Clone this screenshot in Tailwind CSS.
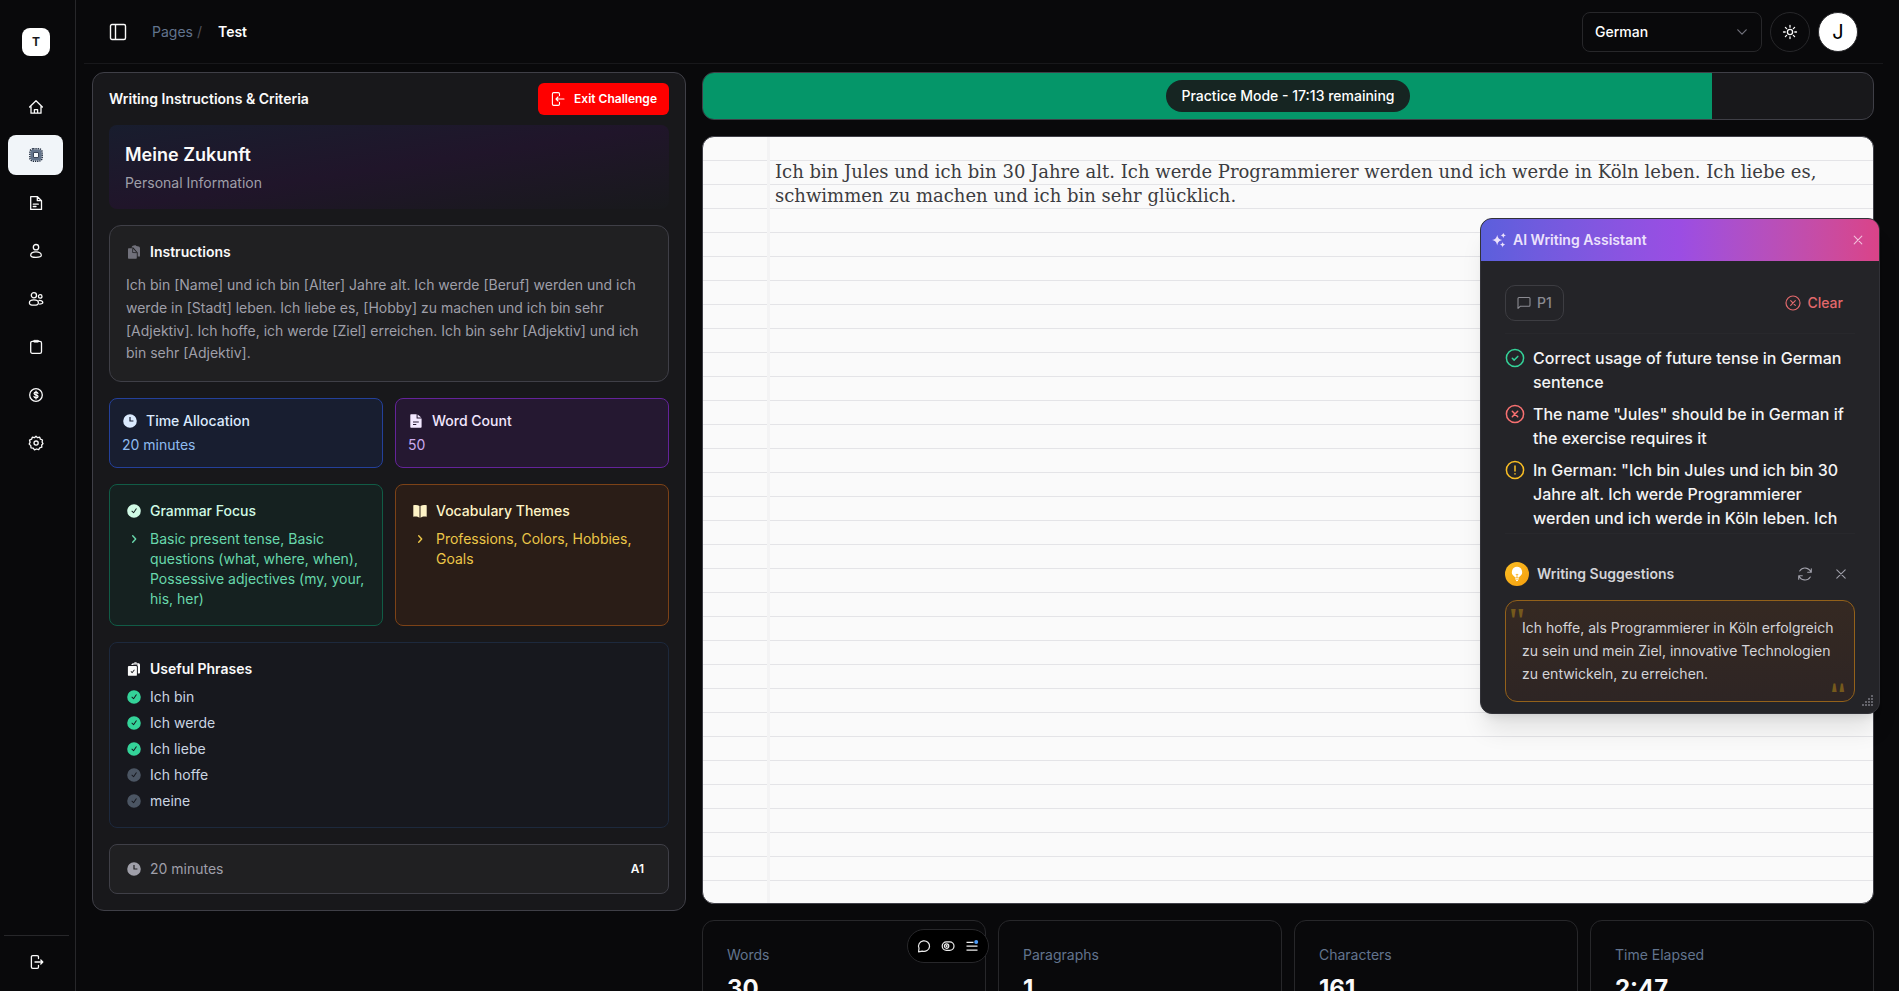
<!DOCTYPE html>
<html lang="en">
<head>
<meta charset="utf-8">
<meta name="viewport" content="width=device-width, initial-scale=1">
<title>Writing practice</title>
<script src="https://cdn.jsdelivr.net/npm/@tailwindcss/browser@4"></script>
</head>
<body class="bg-[#09090b] text-zinc-50 font-['Inter',sans-serif] text-sm antialiased">
<svg class="hidden" aria-hidden="true">
  <symbol id="check-solid" viewBox="0 0 16 16"><path fill="currentColor" fill-rule="evenodd" d="M8 1.2a6.8 6.8 0 1 0 0 13.6A6.8 6.8 0 0 0 8 1.2Zm2.700 4.900a.5.5 0 0 0-.8-.6L7.500 8.900 6.300 7.800a.5.5 0 0 0-.7.7l1.600 1.600c.24.22.6.2.8-.07z"/></symbol>
  <symbol id="clock-solid" viewBox="0 0 16 16"><path fill="currentColor" fill-rule="evenodd" d="M8 1.2a6.8 6.8 0 1 0 0 13.6A6.8 6.8 0 0 0 8 1.2Zm.6 2.9H7.400v4.500h4V7.400H8.600z"/></symbol>
  <symbol id="chevron" viewBox="0 0 16 16"><path fill="none" stroke="currentColor" stroke-width="1.400" stroke-linecap="round" stroke-linejoin="round" d="m6.700 4.700 3 3.300-3 3.300"/></symbol>
</svg>
<div class="relative flex h-screen overflow-hidden">
  <aside class="flex w-[76px] shrink-0 flex-col border-r border-zinc-800">
    <a href="#" class="ml-[22px] mt-7 flex size-7 items-center justify-center rounded-lg bg-white text-xs font-bold text-zinc-900">T</a>
    <nav class="mx-2 mt-[31px] flex flex-col gap-2 pr-1" aria-label="Main">
      <a href="#" aria-label="Home" class="flex h-10 items-center justify-center rounded-lg">
        <svg class="size-4" viewBox="0 0 16 16" fill="none" stroke="currentColor" stroke-width="1.300" stroke-linejoin="round" stroke-linecap="round"><path d="m1.600 8 6.400-6.200L14.400 8M3 7.200v7h10v-7M6.400 14v-3.300h3.200V14"/></svg></a>
      <a href="#" aria-label="Challenges" aria-current="page" class="flex h-10 items-center justify-center rounded-lg bg-slate-100 text-slate-800">
        <svg class="size-4" viewBox="0 0 16 16"><rect x="2.400" y="2.400" width="11.200" height="11.200" rx="3" fill="#64748b"/><rect x="1.800" y="1.800" width="12.400" height="12.400" rx="3.400" fill="none" stroke="currentColor" stroke-width="1.400" stroke-dasharray="1.300 .9"/><rect x="5.500" y="5.500" width="5" height="5" rx=".5" fill="#f8fafc" stroke="currentColor" stroke-width=".8"/></svg></a>
      <a href="#" aria-label="Documents" class="flex h-10 items-center justify-center rounded-lg">
        <svg class="size-4" viewBox="0 0 16 16" fill="none" stroke="currentColor" stroke-width="1.300" stroke-linejoin="round" stroke-linecap="round"><path d="M2.700 1.700h6.800l4 4v8.700H2.700zM9.300 1.700v4h4M5.300 9.200h5M5.300 11.500h2.700"/></svg></a>
      <a href="#" aria-label="Profile" class="flex h-10 items-center justify-center rounded-lg">
        <svg class="size-4" viewBox="0 0 16 16" fill="none" stroke="currentColor" stroke-width="1.300"><circle cx="8" cy="4.200" r="2.700"/><path d="M2.700 12.200c0-2 2.100-3.300 5.300-3.300s5.300 1.300 5.300 3.300c0 1.500-1.600 2.100-5.300 2.100s-5.300-.6-5.300-2.100Z"/></svg></a>
      <a href="#" aria-label="Groups" class="flex h-10 items-center justify-center rounded-lg">
        <svg class="size-4" viewBox="0 0 16 16" fill="none" stroke="currentColor" stroke-width="1.300"><circle cx="5.900" cy="4.200" r="2.600"/><circle cx="12.200" cy="5.400" r="1.800"/><path d="M1.400 11.900c0-1.800 1.700-3 4.500-3s4.500 1.200 4.500 3c0 1.500-1.300 2.200-4.500 2.200s-4.500-.7-4.500-2.200ZM10.500 9.600c2.500-.5 4.300.5 4.300 2 0 1-.9 1.500-3.700 1.500"/></svg></a>
      <a href="#" aria-label="Tasks" class="flex h-10 items-center justify-center rounded-lg">
        <svg class="size-4" viewBox="0 0 16 16" fill="none" stroke="currentColor" stroke-width="1.300" stroke-linejoin="round"><rect x="2.700" y="2.300" width="10.800" height="12" rx="1.600"/><path d="M5.400 2.200c0-.6.500-.9 1-.9h3.400c.6 0 1 .4 1 .9s-.4 1-1 1H6.400c-.6 0-1-.4-1-1Z" fill="currentColor" stroke-width=".6"/></svg></a>
      <a href="#" aria-label="Pricing" class="flex h-10 items-center justify-center rounded-lg">
        <svg class="size-4" viewBox="0 0 16 16" fill="none" stroke="currentColor" stroke-width="1.300" stroke-linecap="round"><circle cx="8" cy="8" r="6.300"/><path d="M9.900 6.300c-.2-.8-1-1.100-1.900-1.100-1.100 0-1.900.5-1.900 1.400 0 2 3.900.8 3.900 2.800 0 .9-.9 1.400-2 1.400-1 0-1.900-.4-2-1.300M8 4.100v7.800"/></svg></a>
      <a href="#" aria-label="Settings" class="flex h-10 items-center justify-center rounded-lg">
        <svg class="size-4" viewBox="0 0 16 16" fill="none" stroke="currentColor" stroke-width="1.300" stroke-linejoin="round"><path d="m8 1.300 1.600 1.400 2.100-.5.700 2 2.100.8-.4 2.200L15 8.500l-1.300 1.500.1 2.200-2.100.6-1 1.900-2.100-.7-2.100.9-1.300-1.800-2.200-.3-.2-2.200L1.200 9.100l.9-1.900-.6-2.100 2.100-.9.700-2 2.100.5z"/><circle cx="8.100" cy="8.100" r="2.100"/></svg></a>
    </nav>
    <div class="ml-1 mr-1.5 mt-auto flex h-14 items-center justify-center border-t border-zinc-800 pb-[3px]">
      <button aria-label="Log out"><svg class="size-4" viewBox="0 0 16 16" fill="none" stroke="currentColor" stroke-width="1.300" stroke-linejoin="round" stroke-linecap="round"><path d="M9.500 4.600V2.900c0-.8-.5-1.300-1.300-1.300H3.700c-.8 0-1.300.5-1.300 1.300v10.200c0 .8.500 1.300 1.300 1.300h4.500c.8 0 1.300-.5 1.300-1.300v-1.700M6 8h7.500M11.800 6l2 2-2 2"/></svg></button>
    </div>
  </aside>

  <div class="flex min-w-0 flex-1 flex-col">
    <header class="ml-2 mr-4 flex h-16 shrink-0 items-center border-b border-zinc-900 px-[25px]">
      <button aria-label="Toggle sidebar"><svg class="size-[18px]" viewBox="0 0 18 18" fill="none" stroke="currentColor" stroke-width="1.400"><rect x="1.500" y="1.500" width="15" height="15" rx="1.500"/><path d="M6.500 1.500v15"/></svg></button>
      <nav class="ml-[25px] flex" aria-label="Breadcrumb"><a href="#" class="text-slate-500">Pages</a><span class="ml-1 text-zinc-600">/</span><a href="#" class="ml-4 font-semibold text-white">Test</a></nav>
      <div class="ml-auto flex items-center gap-2">
        <label class="relative block w-[180px]">
          <select aria-label="Language" class="block h-10 w-full appearance-none rounded-lg border border-zinc-800 bg-transparent px-3 text-sm font-medium text-white"><option>German</option></select>
          <svg class="pointer-events-none absolute right-3 top-3 size-4 text-zinc-500" viewBox="0 0 16 16" fill="none" stroke="currentColor" stroke-width="1.200" stroke-linecap="round" stroke-linejoin="round"><path d="m3.800 5.800 4.200 4.400 4.200-4.400"/></svg>
        </label>
        <button aria-label="Theme" class="flex size-10 items-center justify-center rounded-full border border-zinc-800"><svg class="size-4" viewBox="0 0 16 16" fill="none" stroke="currentColor" stroke-width="1.300" stroke-linecap="round"><circle cx="8" cy="8" r="2.600"/><path d="M8 1.500v1.700M8 12.800v1.700M1.500 8h1.700M12.800 8h1.700M3.400 3.400l1.200 1.200M11.400 11.400l1.200 1.200M3.400 12.600l1.200-1.200M11.400 4.600l1.200-1.200"/></svg></button>
        <button aria-label="Account" class="flex size-10 items-center justify-center rounded-full border border-zinc-800 bg-white text-xl text-black">J</button>
      </div>
    </header>

    <main class="flex flex-1 items-start gap-4 pl-4 pr-[25px] pt-2">
      <section class="w-1/3 shrink-0 rounded-xl border border-zinc-700 bg-zinc-900 px-4 pb-4 pt-2.5">
        <div class="flex items-center justify-between">
          <h2 class="font-semibold">Writing Instructions &amp; Criteria</h2>
          <button class="flex h-8 items-center gap-2 rounded-md bg-[#ff0000] px-3 text-xs font-semibold text-white"><svg class="size-4" viewBox="0 0 16 16" fill="none" stroke="currentColor" stroke-width="1.100" stroke-linejoin="round" stroke-linecap="round"><path d="M9.500 4.600V2.900c0-.8-.5-1.300-1.300-1.300H3.700c-.8 0-1.300.5-1.300 1.300v10.200c0 .8.500 1.300 1.300 1.300h4.500c.8 0 1.300-.5 1.300-1.300v-1.700M6 8h8M8 6 6 8l2 2"/></svg>Exit Challenge</button>
        </div>
        <div class="mt-2.5 rounded-lg bg-linear-to-br from-[#181d2e] via-[#20152a] to-[#18191c] p-4">
          <h3 class="text-lg/7 font-semibold">Meine Zukunft</h3>
          <p class="mt-1 text-zinc-400">Personal Information</p>
        </div>
        <div class="mt-4 rounded-xl border border-zinc-700 bg-[#202022] p-4">
          <h3 class="flex items-center gap-2 font-semibold"><svg class="size-4 text-zinc-500" viewBox="0 0 16 16"><path fill="currentColor" d="M2 5.200c0-.6.400-1 1-1h3.600l4.200 4.600v5c0 .6-.4 1-1 1H3c-.6 0-1-.4-1-1z"/><path fill="currentColor" d="M5.500 3.400C6 1.900 7.300 1.200 9 1.200h.6c.6.700 1.200 1 2.200 1 1.300 0 2.200.9 2.200 2.100v8.200h-2.300V8.400L7.400 3.600z"/><path d="m6.700 4.300-.1 4.200 4.200.2" fill="none" stroke="#202022" stroke-width=".8"/></svg>Instructions</h3>
          <p class="mt-3 leading-relaxed text-zinc-400">Ich bin [Name] und ich bin [Alter] Jahre alt. Ich werde [Beruf] werden und ich werde in [Stadt] leben. Ich liebe es, [Hobby] zu machen und ich bin sehr [Adjektiv]. Ich hoffe, ich werde [Ziel] erreichen. Ich bin sehr [Adjektiv] und ich bin sehr [Adjektiv].</p>
        </div>
        <div class="mt-4 grid grid-cols-2 gap-3">
          <div class="rounded-lg border border-[#24409a] bg-[#181e30] p-3">
            <h3 class="flex items-center gap-2 font-medium text-blue-100"><svg class="size-4"><use href="#clock-solid"/></svg>Time Allocation</h3>
            <p class="mt-1 text-[#8fbcf0]">20 minutes</p>
          </div>
          <div class="rounded-lg border border-[#64239a] bg-[#251831] p-3">
            <h3 class="flex items-center gap-2 font-medium text-purple-100"><svg class="size-4" viewBox="0 0 16 16"><path fill="currentColor" fill-rule="evenodd" d="M2.300 2.200c0-.6.400-1 1-1h5.300v4.200h5v8.400c0 .6-.4 1-1 1H3.300c-.6 0-1-.4-1-1zM5 8.600v1h5.800v-1zm0 2.500v1h3.300v-1zM9.600 1.600l3.700 2.900H9.600z"/></svg>Word Count</h3>
            <p class="mt-1 text-[#cba9ee]">50</p>
          </div>
        </div>
        <div class="mt-4 grid grid-cols-2 gap-3">
          <div class="rounded-lg border border-[#115c46] bg-[#152120] p-4">
            <h3 class="flex items-center gap-2 font-medium text-emerald-100"><svg class="size-4"><use href="#check-solid"/></svg>Grammar Focus</h3>
            <ul class="mt-2 text-[#68d8ac]"><li class="flex gap-2"><svg class="mt-0.5 size-4 shrink-0"><use href="#chevron"/></svg>Basic present tense, Basic questions (what, where, when), Possessive adjectives (my, your, his, her)</li></ul>
          </div>
          <div class="rounded-lg border border-[#7c4217] bg-[#2a1d17] p-4">
            <h3 class="flex items-center gap-2 font-medium text-amber-100"><svg class="size-4" viewBox="0 0 16 16"><path fill="currentColor" d="M7.500 2.900C5.800 1.800 3.400 1.700 1.300 2.300v11.500c2.100-.5 4.400-.4 6.200.9zM8.500 2.900c1.700-1.100 4.100-1.200 6.200-.6v11.500c-2.100-.5-4.400-.4-6.200.9z"/></svg>Vocabulary Themes</h3>
            <ul class="mt-2 text-[#ecc648]"><li class="flex gap-2"><svg class="mt-0.5 size-4 shrink-0"><use href="#chevron"/></svg>Professions, Colors, Hobbies, Goals</li></ul>
          </div>
        </div>
        <div class="mt-4 rounded-lg border border-slate-800 bg-[#17181e] p-4">
          <h3 class="flex items-center gap-2 font-semibold"><svg class="size-4" viewBox="0 0 16 16"><path fill="currentColor" fill-rule="evenodd" d="M2.800 5h7.200c.5 0 .9.400.9.900v8c0 .5-.4.900-.9.900H2.800c-.5 0-.9-.4-.9-.9v-8c0-.5.400-.9.900-.9Zm6 4-.7-.5-2 2.400-.9-.8-.6.6 1.600 1.500z"/><path fill="currentColor" d="M5.200 4c.3-1.200 1.200-1.800 2.400-1.800C8.100 1.500 8.700 1.200 9.500 1.200s1.400.4 1.800 1h1c1 0 1.700.7 1.700 1.700v7.700c0 .6-.4 1-1 1h-1.100V5.500c0-.8-.6-1.500-1.500-1.500z"/><path fill="none" stroke="#17181e" stroke-width=".7" d="M7.300 3.200h4.200"/></svg>Useful Phrases</h3>
          <ul class="mt-2 flex flex-col gap-1.5 text-slate-300">
            <li class="flex items-center gap-2"><svg class="size-4 text-[#34d399]"><use href="#check-solid"/></svg>Ich bin</li>
            <li class="flex items-center gap-2"><svg class="size-4 text-[#34d399]"><use href="#check-solid"/></svg>Ich werde</li>
            <li class="flex items-center gap-2"><svg class="size-4 text-[#34d399]"><use href="#check-solid"/></svg>Ich liebe</li>
            <li class="flex items-center gap-2"><svg class="size-4 text-[#4b5563]"><use href="#check-solid"/></svg>Ich hoffe</li>
            <li class="flex items-center gap-2"><svg class="size-4 text-[#4b5563]"><use href="#check-solid"/></svg>meine</li>
          </ul>
        </div>
        <div class="mt-4 flex h-[50px] items-center justify-between rounded-lg border border-zinc-700 bg-[#202022] px-4">
          <span class="flex items-center gap-2 text-zinc-400"><svg class="size-4"><use href="#clock-solid"/></svg>20 minutes</span>
          <span class="px-2 text-xs font-semibold">A1</span>
        </div>
      </section>

      <section class="min-w-0 flex-1">
        <div class="relative h-12 overflow-hidden rounded-xl border border-zinc-700 bg-zinc-900">
          <div class="h-full bg-[#059669]" style="width:86.2%"></div>
          <div class="absolute inset-0 flex items-center justify-center"><span class="flex h-8 items-center rounded-full bg-zinc-900/90 px-4 font-medium text-white">Practice Mode - 17:13 remaining</span></div>
        </div>
        <div class="mt-4">
          <textarea aria-label="Your text" spellcheck="false" class="block h-[768px] w-full resize-none rounded-xl border border-zinc-700 bg-[#fafafa] bg-[linear-gradient(90deg,transparent_64px,#f3f3f4_64px,#f3f3f4_67px,transparent_67px),repeating-linear-gradient(180deg,transparent_0px,transparent_23px,#e4e4e7_23px,#e4e4e7_24px)] py-[23px] pl-[72px] pr-6 font-['DejaVu_Serif',serif] text-lg/6 text-[#3c3c40] outline-none">Ich bin Jules und ich bin 30 Jahre alt. Ich werde Programmierer werden und ich werde in Köln leben. Ich liebe es, schwimmen zu machen und ich bin sehr glücklich.</textarea>
        </div>
        <dl class="mt-4 grid grid-cols-4 gap-3">
          <div class="rounded-xl border border-zinc-800 p-6"><dt class="text-slate-500">Words</dt><dd class="mt-2 text-2xl font-bold">30</dd></div>
          <div class="rounded-xl border border-zinc-800 p-6"><dt class="text-slate-500">Paragraphs</dt><dd class="mt-2 text-2xl font-bold">1</dd></div>
          <div class="rounded-xl border border-zinc-800 p-6"><dt class="text-slate-500">Characters</dt><dd class="mt-2 text-2xl font-bold">161</dd></div>
          <div class="rounded-xl border border-zinc-800 p-6"><dt class="text-slate-500">Time Elapsed</dt><dd class="mt-2 text-2xl font-bold">2:47</dd></div>
        </dl>
      </section>
    </main>
  </div>

  <!-- Floating toolbar -->
  <div class="absolute bottom-7 left-[907px] flex h-[34px] items-center gap-2 rounded-full border border-zinc-800 bg-black px-2">
    <button aria-label="Comments"><svg class="size-4" viewBox="0 0 16 16" fill="none" stroke="#ededed" stroke-width="1.200" stroke-linejoin="round"><path d="M2.600 13.800 3 10.200A5.500 5.300 0 1 1 6.200 13.100Z"/></svg></button>
    <button aria-label="Preview"><svg class="size-4" viewBox="0 0 16 16" fill="none" stroke="#ededed" stroke-width="1.200"><rect x="2.200" y="3.800" width="11.800" height="8.600" rx="4.300"/><circle cx="6.600" cy="8.100" r="2.200"/><circle cx="6.600" cy="8.100" r=".5"/></svg></button>
    <button aria-label="Menu"><svg class="size-4" viewBox="0 0 16 16"><path d="M2.500 4.300h7M2.500 8.200h11M2.500 12.100h11" stroke="#ededed" stroke-width="1.300"/><circle cx="12.200" cy="4.100" r="2" fill="#4f9cf9"/></svg></button>
  </div>

  <!-- Assistant window -->
  <aside class="absolute right-[19px] top-[218px] w-[400px] overflow-hidden rounded-xl border border-[#323238] bg-[#242428] shadow-xl" aria-label="AI Writing Assistant">
    <header class="flex h-[42px] items-center gap-1.5 bg-linear-to-r from-[#5b5fdc] via-[#9b4de3] to-[#da4388] px-2.5 text-[#ece2fc]">
      <svg class="size-4" viewBox="0 0 16 16" fill="currentColor"><path d="M6.200 2.800c.7 3.400 1.900 4.600 5.200 5.300-3.300.7-4.500 1.900-5.200 5.300C5.500 10 4.300 8.800 1 8.100c3.300-.7 4.500-1.900 5.200-5.300ZM12.300.8c.4 1.700 1 2.300 2.700 2.700-1.700.4-2.300 1-2.700 2.700-.4-1.700-1-2.300-2.700-2.700 1.700-.4 2.300-1 2.700-2.700ZM11.600 10.100c.4 1.700 1 2.300 2.700 2.700-1.700.4-2.300 1-2.700 2.700-.4-1.700-1-2.300-2.700-2.700 1.700-.4 2.300-1 2.700-2.700Z"/></svg>
      <h2 class="font-semibold">AI Writing Assistant</h2>
      <button aria-label="Close" class="ml-auto mr-[3px] text-[#f3c0dc]"><svg class="size-4" viewBox="0 0 16 16" fill="none" stroke="currentColor" stroke-width="1.100" stroke-linecap="round"><path d="m4.200 4.200 7.600 7.600M11.800 4.200l-7.600 7.600"/></svg></button>
    </header>
    <div class="px-6 pb-[11px] pt-6">
      <div class="flex items-center justify-between border-b border-[#28282c] pb-3">
        <button class="flex h-9 items-center gap-1.5 rounded-[10px] border border-[#3d3d42] px-[11px] font-medium text-[#8b8b92]"><svg class="size-3.5" viewBox="0 0 14 14" fill="none" stroke="currentColor" stroke-width="1.100" stroke-linejoin="round"><path d="M1 12.300V2.500c0-.6.400-1 1-1h10c.6 0 1 .4 1 1v6.800c0 .6-.4 1-1 1H3.200z"/></svg>P1</button>
        <button class="flex h-9 items-center gap-1.5 px-3 font-medium text-[#e2696c]"><svg class="size-4" viewBox="0 0 16 16" fill="none" stroke="currentColor" stroke-width="1.200" stroke-linecap="round"><circle cx="8" cy="8" r="7"/><path d="m5.700 5.700 4.600 4.600M10.300 5.700l-4.600 4.600"/></svg>Clear</button>
      </div>
      <ul class="mt-3 flex h-46 flex-col gap-2 overflow-hidden text-base/6 font-medium text-zinc-100">
        <li class="flex gap-2"><svg class="mt-0.5 size-5 shrink-0 text-[#34d399]" viewBox="0 0 20 20" fill="none" stroke="currentColor" stroke-width="1.500" stroke-linecap="round" stroke-linejoin="round"><circle cx="10" cy="10" r="8.600"/><path d="m7.300 10.200 1.900 1.900 3.600-3.700"/></svg>Correct usage of future tense in German sentence</li>
        <li class="flex gap-2"><svg class="mt-0.5 size-5 shrink-0 text-[#f87171]" viewBox="0 0 20 20" fill="none" stroke="currentColor" stroke-width="1.500" stroke-linecap="round"><circle cx="10" cy="10" r="8.600"/><path d="m7.300 7.300 5.400 5.400M12.700 7.300l-5.400 5.400"/></svg>The name "Jules" should be in German if the exercise requires it</li>
        <li class="flex gap-2"><svg class="mt-0.5 size-5 shrink-0 text-[#fbbf24]" viewBox="0 0 20 20" fill="none" stroke="currentColor" stroke-width="1.500" stroke-linecap="round"><circle cx="10" cy="10" r="8.600"/><path d="M10 6v5M10 13.700v.2"/></svg>In German: "Ich bin Jules und ich bin 30 Jahre alt. Ich werde Programmierer werden und ich werde in Köln leben. Ich</li>
      </ul>
      <div class="mt-[3px] flex items-center border-t border-[#28282c] pt-7">
        <span class="flex size-6 items-center justify-center rounded-full bg-linear-to-br from-[#fbbf24] to-[#f59e0b]"><svg class="size-4" viewBox="0 0 16 16" fill="#fff"><path d="M8 .8a5.200 5.200 0 0 0-3 9.400c.7.500 1 .9 1.100 1.400h1.500V9.300L6.500 8.200l.6-.5.9.7.9-.7.6.5-1.100 1.100v2.300h1.500c.1-.5.400-.9 1.100-1.400A5.200 5.200 0 0 0 8 .8ZM6.200 12.300h3.600v1.200H6.200zM6.900 14h2.200c-.1.800-.5 1.200-1.100 1.200S7 14.800 6.900 14Z"/></svg></span>
        <h3 class="ml-2 font-semibold text-zinc-300">Writing Suggestions</h3>
        <button aria-label="Refresh" class="ml-auto text-zinc-400"><svg class="size-4" viewBox="0 0 16 16" fill="none" stroke="currentColor" stroke-width="1.100" stroke-linecap="round" stroke-linejoin="round"><path d="M14 6.300A6.300 6.300 0 0 0 2.700 5M14.300 2.700v3.600h-3.600M2 9.700A6.300 6.300 0 0 0 13.300 11M1.700 13.300V9.700h3.600"/></svg></button>
        <button aria-label="Dismiss" class="ml-5 mr-1.5 text-zinc-400"><svg class="size-4" viewBox="0 0 16 16" fill="none" stroke="currentColor" stroke-width="1.100" stroke-linecap="round"><path d="m3.800 3.800 8.400 8.400M12.200 3.800l-8.400 8.400"/></svg></button>
      </div>
      <blockquote class="relative mt-3.5 rounded-xl border border-[#93611a] bg-linear-to-b from-[#352922] to-[#2e2524] p-4 leading-relaxed text-zinc-300">
        <span class="absolute left-px top-0 font-['Liberation_Serif',serif] text-4xl font-bold text-[#75591c]" aria-hidden="true">"</span>
        Ich hoffe, als Programmierer in Köln erfolgreich zu sein und mein Ziel, innovative Technologien zu entwickeln, zu erreichen.
        <span class="absolute bottom-px right-1.5 rotate-180 font-['Liberation_Serif',serif] text-4xl font-bold text-[#75591c]" aria-hidden="true">"</span>
      </blockquote>
    </div>
    <svg class="absolute bottom-1.5 right-[5px] size-3 text-[#63636a]" viewBox="0 0 12 12" fill="currentColor"><path d="M9 0h2v2H9zM6 3h2v2H6zM9 3h2v2H9zM3 6h2v2H3zM6 6h2v2H6zM9 6h2v2H9zM0 9h2v2H0zM3 9h2v2H3zM6 9h2v2H6zM9 9h2v2H9z"/></svg>
  </aside>
</div>
</body>
</html>
